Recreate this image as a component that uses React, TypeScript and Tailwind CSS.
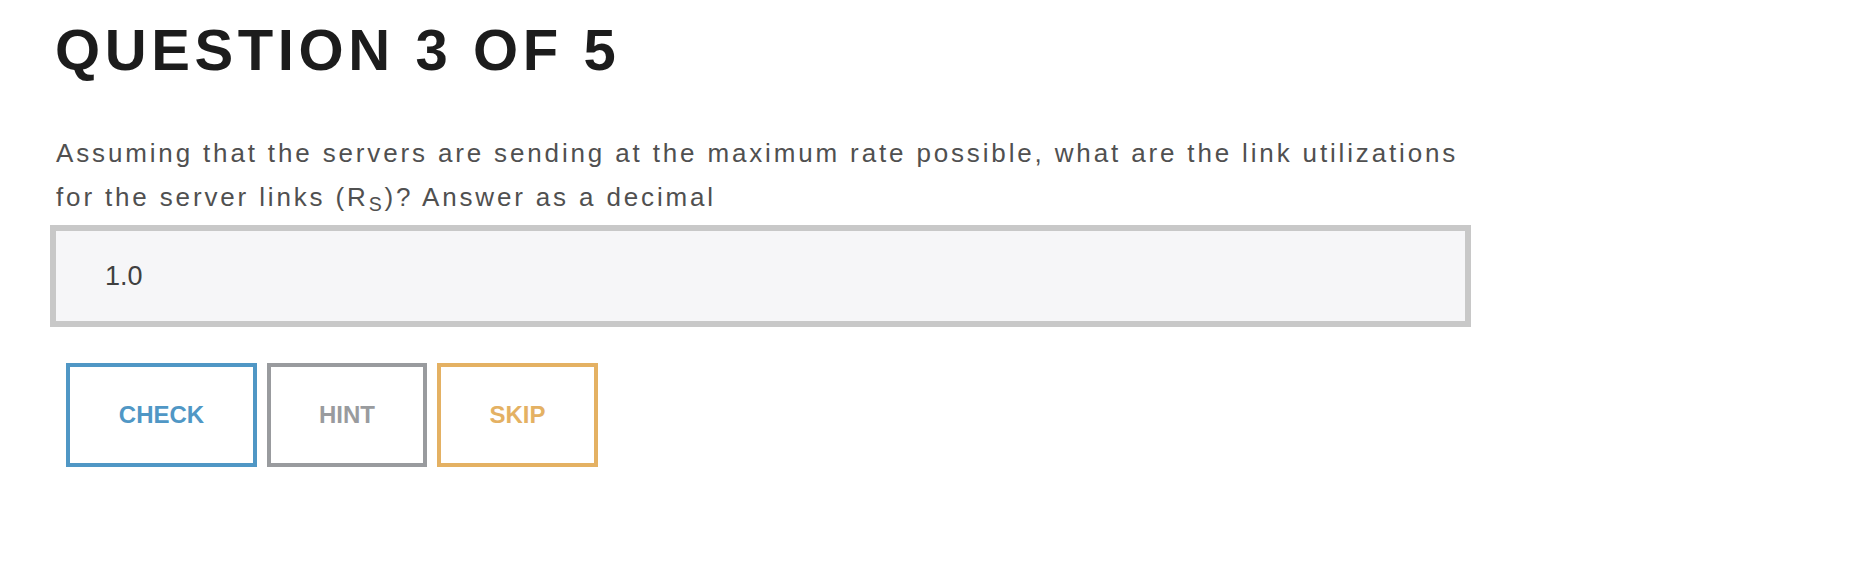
import { useState } from 'react'

const buttons = [
  { label: 'CHECK', className: 'w-[191px] border-[#5097c5] text-[#5097c5]' },
  { label: 'HINT', className: 'w-[160px] border-[#999b9e] text-[#999b9e]' },
  { label: 'SKIP', className: 'w-[161px] border-[#e4b163] text-[#e4b163]' },
]

export default function App() {
  const [answer, setAnswer] = useState('1.0')

  return (
    <div className="min-h-screen bg-white font-['Liberation_Sans',Arial,sans-serif]">
      <div className="w-[1471px] pl-[50px] pt-[21px]">
        {/* Title */}
        <h1 className="ml-[5px] text-[58px] leading-[58px] font-bold tracking-[4.6px] text-[#1c1c1c]">
          QUESTION 3 OF 5
        </h1>

        {/* Prompt */}
        <p className="ml-[6px] mt-[52px] text-[26px] leading-[44px] tracking-[2.85px] text-[#505050]">
          Assuming that the servers are sending at the maximum rate possible, what are the link utilizations
          <br />
          for the server links (R<sub>S</sub>)? Answer as a decimal
        </p>

        {/* Answer field */}
        <input
          type="text"
          value={answer}
          onChange={e => setAnswer(e.target.value)}
          className="mt-[6px] block h-[102px] w-full border-[6px] border-[#c8c8c8] bg-[#f6f6f8] pl-[49px] text-[27px] text-[#404040] outline-none"
        />

        {/* Actions */}
        <div className="ml-[16px] mt-[36px] flex gap-[10px]">
          {buttons.map(b => (
            <button
              key={b.label}
              type="button"
              className={`border-4 bg-white py-9 text-center text-[24px] leading-[24px] font-bold ${b.className}`}
            >
              {b.label}
            </button>
          ))}
        </div>
      </div>
    </div>
  )
}
